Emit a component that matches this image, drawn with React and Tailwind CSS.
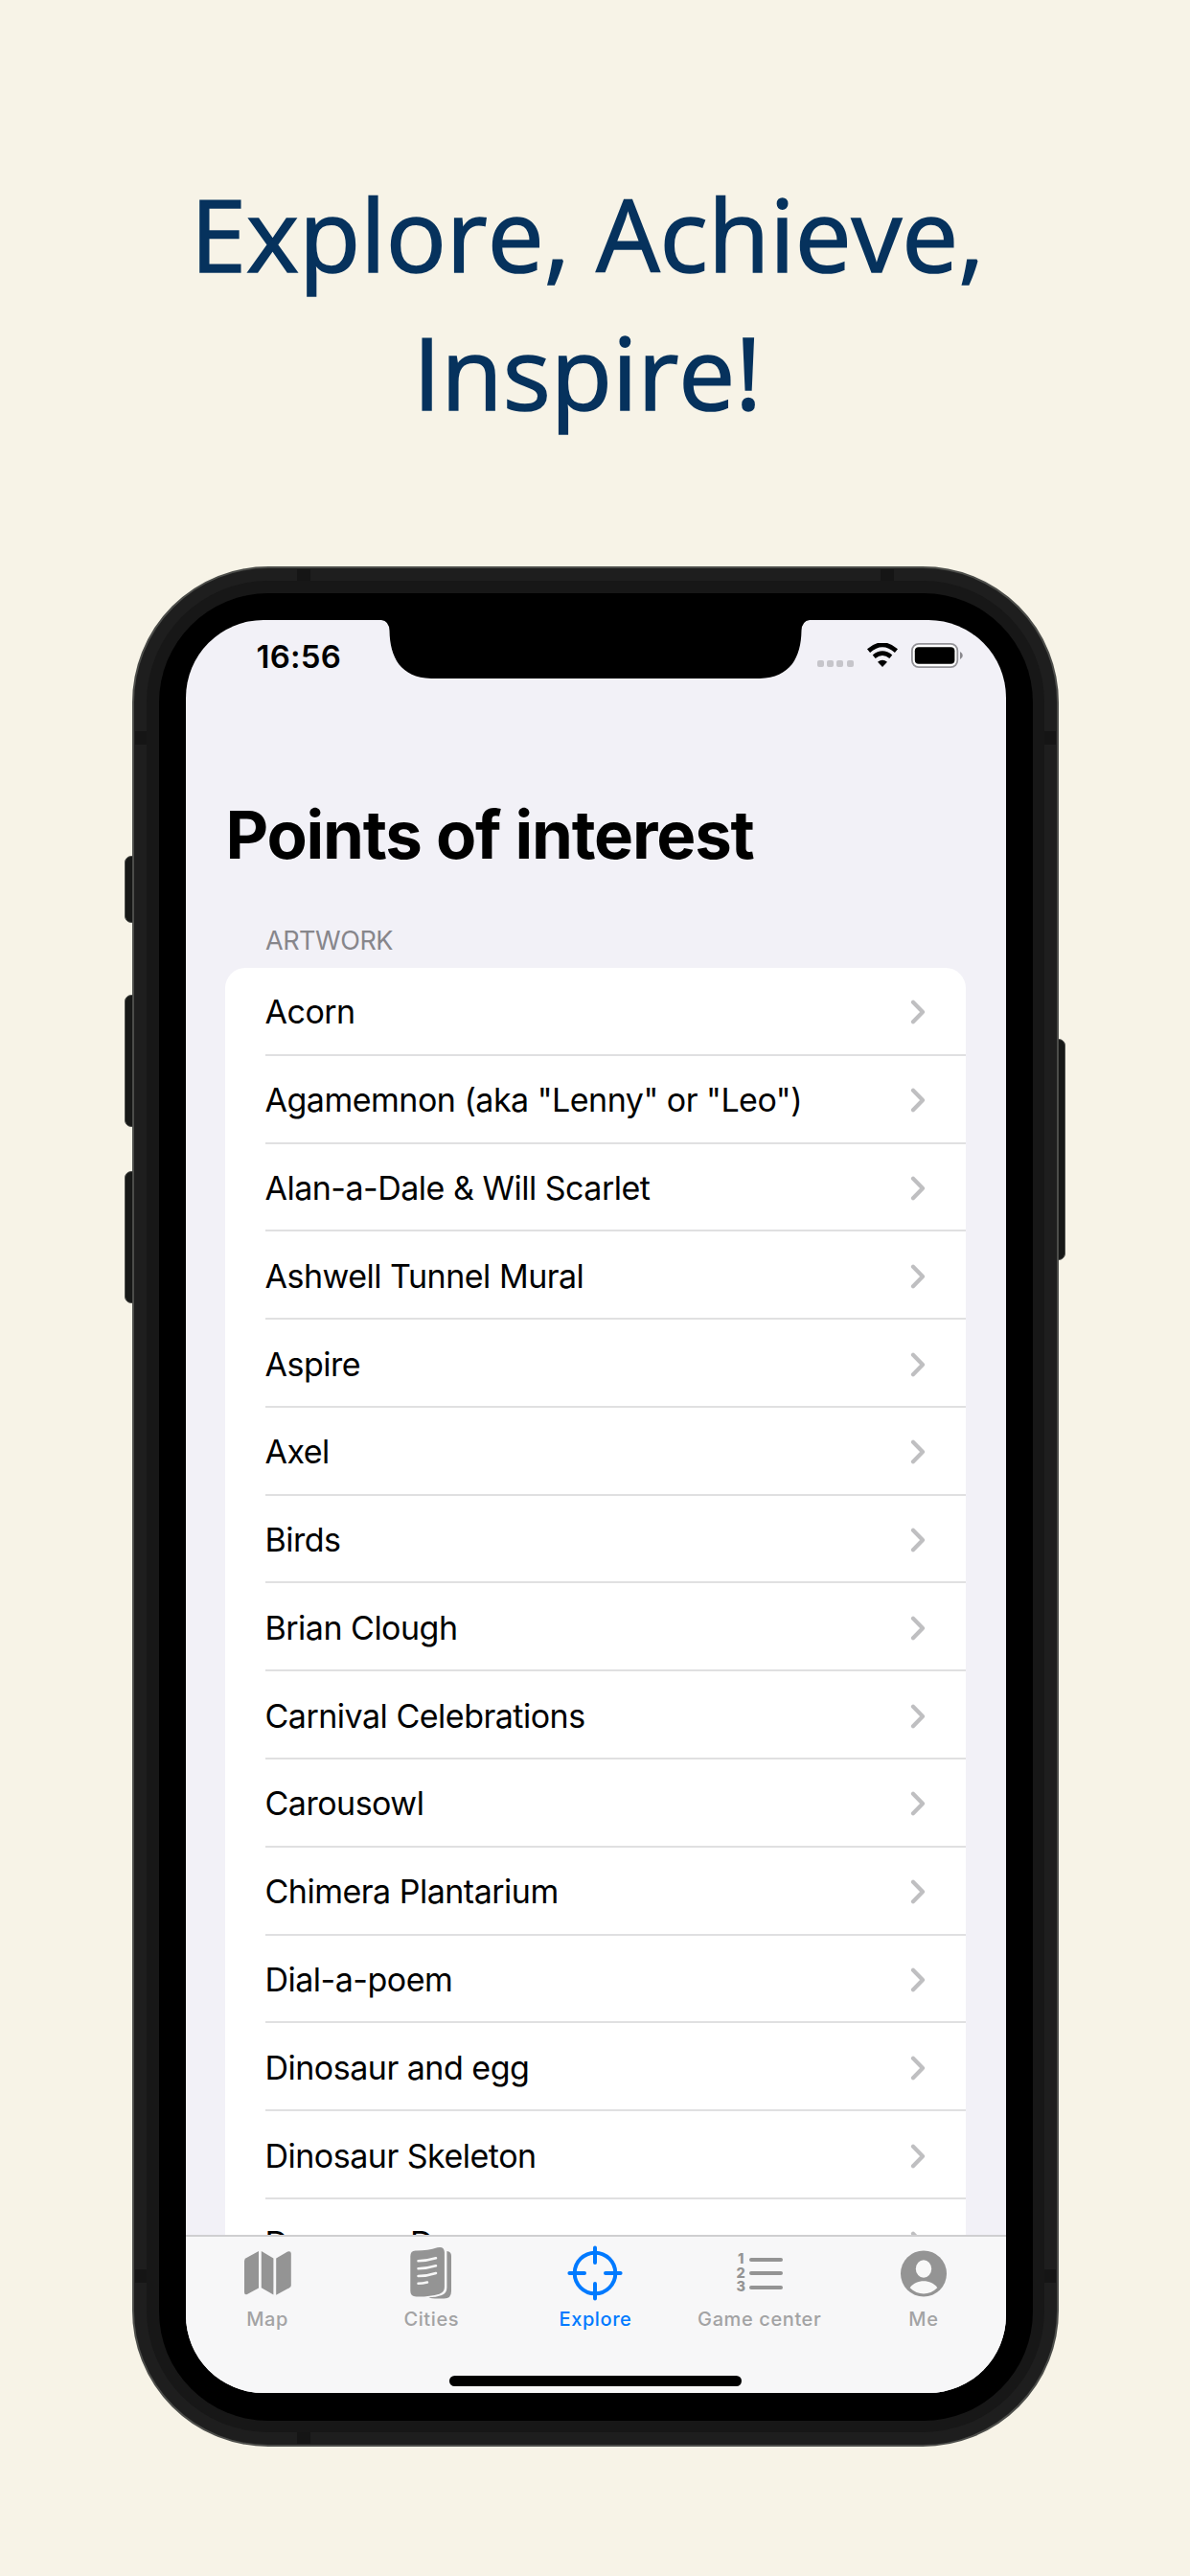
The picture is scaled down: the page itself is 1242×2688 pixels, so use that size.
const places = [
  'Acorn',
  'Agamemnon (aka "Lenny" or "Leo")',
  'Alan-a-Dale & Will Scarlet',
  'Ashwell Tunnel Mural',
  'Aspire',
  'Axel',
  'Birds',
  'Brian Clough',
  'Carnival Celebrations',
  'Carousowl',
  'Chimera Plantarium',
  'Dial-a-poem',
  'Dinosaur and egg',
  'Dinosaur Skeleton',
  'Dungeon Door',
];

function Chevron() {
  return (
    <svg width="16" height="26" viewBox="0 0 16 26" fill="none" stroke="#bfbfc1" strokeWidth="4.2" strokeLinecap="round" strokeLinejoin="round">
      <path d="M3 2.8 13 13 3 23.2" />
    </svg>
  );
}

function MapIcon() {
  return (
    <svg width="50" height="48" viewBox="0 0 50 48" fill="#949494">
      <path d="M1 11.5Q1 9.3 2.8 8.3L16 1V39.5L4 46Q1 47 1 44Z" />
      <path d="M18.8 1 31.4 8.6V46.6L18.8 39.2Z" />
      <path d="M34.2 8.6 46.2 1.6Q49.6.4 49.8 3.6V36.4Q49.8 38.3 48 39.3L34.2 46.8Z" />
    </svg>
  );
}

function CitiesIcon() {
  return (
    <svg width="44" height="56" viewBox="0 0 44 56" fill="none">
      <path d="M38.4 5Q43 5.6 43 10V47Q43 54.5 35.5 54.5H26Q20 54 19.5 53.3 27 53.2 33 51 38.4 49 38.4 43Z" fill="#949494" />
      <path d="M5.5 4.5Q18 4.7 28.5 1.2 35.6-.4 35.9 6V42.5Q35.9 48 30.5 49.7 20 52.8 6.5 52.5.3 52.3.3 46.5V10.5Q.3 4.7 5.5 4.5Z" fill="#949494" />
      <path d="M8.5 15.3Q18 15 27 12.3M8.5 23.3Q18 23 27 20.3M8.5 31Q18 31 27 28M8.5 38.8Q13 38.8 18 37.5" stroke="#f7f7f7" strokeWidth="2.5" strokeLinecap="round" />
    </svg>
  );
}

function ExploreIcon() {
  return (
    <svg width="58" height="58" viewBox="0 0 58 58" fill="none" stroke="#007aff" strokeLinecap="round">
      <circle cx="29" cy="29" r="21.3" strokeWidth="4" />
      <path d="M29 2.4V18M29 40V55.6M2.4 29H18M40 29H55.6" strokeWidth="4" />
    </svg>
  );
}

function RankIcon() {
  return (
    <span className="flex items-center gap-[4px] text-[#949494]">
      <span className="flex flex-col items-center font-['Inter'] text-[14.5px] font-extrabold leading-[14.6px]">
        <span>1</span>
        <span>2</span>
        <span>3</span>
      </span>
      <span className="flex flex-col gap-[10.5px]">
        <span className="h-[4px] w-[35px] rounded-full bg-[#949494]" />
        <span className="h-[4px] w-[35px] rounded-full bg-[#949494]" />
        <span className="h-[4px] w-[35px] rounded-full bg-[#949494]" />
      </span>
    </span>
  );
}

function MeIcon() {
  return (
    <svg width="48" height="49" viewBox="0 0 48 49">
      <circle cx="24" cy="24.5" r="24" fill="#949494" />
      <ellipse cx="24" cy="19.5" rx="8.2" ry="9.3" fill="#f8f8f8" />
      <path d="M9.7 39.2C16 30 32 30 38.3 39.2 30 47.5 18 47.5 9.7 39.2Z" fill="#f8f8f8" />
    </svg>
  );
}

const tabs = [
  { label: 'Map', icon: <MapIcon /> },
  { label: 'Cities', icon: <CitiesIcon /> },
  { label: 'Explore', icon: <ExploreIcon />, active: true },
  { label: 'Game center', icon: <RankIcon /> },
  { label: 'Me', icon: <MeIcon /> },
];

function StatusIcons() {
  return (
    <div className="flex h-[28px] items-center">
      <div className="mr-[14px] flex gap-[3.3px] pt-[17px]">
        <span className="size-[7px] rounded-[2px] bg-[#c6c5ca]" />
        <span className="size-[7px] rounded-[2px] bg-[#c6c5ca]" />
        <span className="size-[7px] rounded-[2px] bg-[#c6c5ca]" />
        <span className="size-[7px] rounded-[2px] bg-[#c6c5ca]" />
      </div>
      <svg className="mr-[14px]" width="32" height="26" viewBox="0 0 32 26" fill="none">
        <path d="M1.5 8.1Q16-4.5 30.5 8.1" stroke="#000" strokeWidth="4.8" />
        <path d="M7.2 14.2Q16 7 24.8 14.2" stroke="#000" strokeWidth="4.6" />
        <path d="M16 25 11 19.8Q16 15.5 21 19.8Z" fill="#000" />
      </svg>
      <svg width="56" height="26" viewBox="0 0 56 26">
        <rect x=".9" y=".9" width="47.4" height="24.2" rx="7" fill="#fff" stroke="#949398" strokeWidth="1.8" />
        <rect x="3.8" y="4.2" width="41.6" height="17.6" rx="4" fill="#000" />
        <path d="M51 9Q53.8 10.5 53.8 13T51 17Z" fill="#8a898e" />
      </svg>
    </div>
  );
}

function Notch() {
  return (
    <svg className="absolute left-[204px] top-[-1px]" width="448" height="63" viewBox="0 0 448 63">
      <path d="M0 0V1Q8 2 8.5 12C9 40 20 61 52 62H395C427 61 438 40 438.5 12Q439 2 447 1V0Z" fill="#000" />
    </svg>
  );
}

function Phone() {
  return (
    <div className="relative h-[1962px] w-[967px]">
      <span className="absolute left-[-8px] top-[302px] h-[70px] w-[16px] rounded-[7px] border border-[#4a4b48] bg-[#171817]" />
      <span className="absolute left-[-8px] top-[447px] h-[138px] w-[16px] rounded-[7px] border border-[#4a4b48] bg-[#171817]" />
      <span className="absolute left-[-8px] top-[631px] h-[138px] w-[16px] rounded-[7px] border border-[#4a4b48] bg-[#171817]" />
      <span className="absolute right-[-7px] top-[493px] h-[231px] w-[16px] rounded-[7px] border border-[#4a4b48] bg-[#171817]" />
      <div className="relative h-full rounded-[142px] border-2 border-[#4c4d4a] bg-[#1e1e1e] p-[13px]">
        <span className="absolute left-[170px] top-[1px] h-[14px] w-[14px] bg-[#151515]" />
        <span className="absolute left-[779px] top-[1px] h-[14px] w-[14px] bg-[#151515]" />
        <span className="absolute left-[170px] bottom-[1px] h-[14px] w-[14px] bg-[#151515]" />
        <span className="absolute left-[1px] top-[170px] h-[14px] w-[14px] bg-[#151515]" />
        <span className="absolute right-[1px] top-[170px] h-[14px] w-[14px] bg-[#151515]" />
        <span className="absolute left-[1px] top-[1775px] h-[14px] w-[14px] bg-[#151515]" />
        <span className="absolute right-[1px] top-[1775px] h-[14px] w-[14px] bg-[#151515]" />
        <div className="relative h-full rounded-[127px] bg-[#171717] p-[12.5px]">
          <div className="h-full rounded-[114px] bg-black px-[28px] pb-[28.5px] pt-[28.5px]">
            <Screen />
          </div>
        </div>
      </div>
    </div>
  );
}

function Screen() {
  return (
    <div className="relative flex h-full flex-col overflow-hidden rounded-[81px] bg-[#f2f1f7] font-['Inter'] text-black">
      <Notch />
      <header className="flex items-center justify-between pl-[74px] pr-[43px] pt-[23px]">
        <span className="pt-[2px] text-[33px] font-semibold leading-[26px] tracking-[0.2px]">16:56</span>
        <StatusIcons />
      </header>
      <h1 className="ml-[42px] mt-[127px] text-[69px] font-bold leading-[92px] tracking-[-1.2px]">Points of interest</h1>
      <h2 className="ml-[83.5px] mt-[49px] text-[27px] leading-[32px] tracking-[-0.45px] text-[#87868b]">ARTWORK</h2>
      <main className="mx-[41.5px] mt-[12px] min-h-0 flex-1 overflow-hidden rounded-t-[21px] bg-white">
        {places.map((name) => (
          <div key={name} className="flex h-[91.785px] pl-[41.5px]">
            <div className="flex flex-1 items-center justify-between border-b-2 border-[#e0e0e1] pr-[42px] pt-[3px]">
              <span className="whitespace-nowrap text-[34px] leading-[40px] tracking-[-0.5px]">{name}</span>
              <Chevron />
            </div>
          </div>
        ))}
      </main>
      <nav className="h-[165px] shrink-0 border-t-2 border-[#cfcfd1] bg-[#f7f7f8]">
        <div className="grid h-[102px] grid-cols-5">
          {tabs.map((tab) => (
            <div key={tab.label} className="flex flex-col items-center">
              <div className="mt-[8px] flex h-[60px] items-center">{tab.icon}</div>
              <span
                className={
                  tab.active
                    ? 'mt-[5px] whitespace-nowrap text-[20px] font-medium leading-[26px] tracking-[0.6px] text-[#007aff]'
                    : 'mt-[5px] whitespace-nowrap text-[20px] font-medium leading-[26px] tracking-[0.6px] text-[#a3a3a4]'
                }
              >
                {tab.label}
              </span>
            </div>
          ))}
        </div>
        <div className="mx-auto mt-[43px] h-[10.5px] w-[305px] rounded-full bg-black" />
      </nav>
    </div>
  );
}

export default function App() {
  return (
    <div className="flex h-[2688px] w-[1242px] flex-col overflow-hidden bg-[#f7f3e7]">
      <div className="h-[591px] shrink-0 pt-[172px] text-center">
        <p className="origin-center -translate-x-[8px] whitespace-nowrap font-['Open_Sans'] text-[105px] leading-[144px] text-[#06325d] [-webkit-text-stroke:1.6px_#06325d]">
          Explore, Achieve,
          <br />
          Inspire!
        </p>
      </div>
      <div className="ml-[138px]">
        <Phone />
      </div>
    </div>
  );
}
